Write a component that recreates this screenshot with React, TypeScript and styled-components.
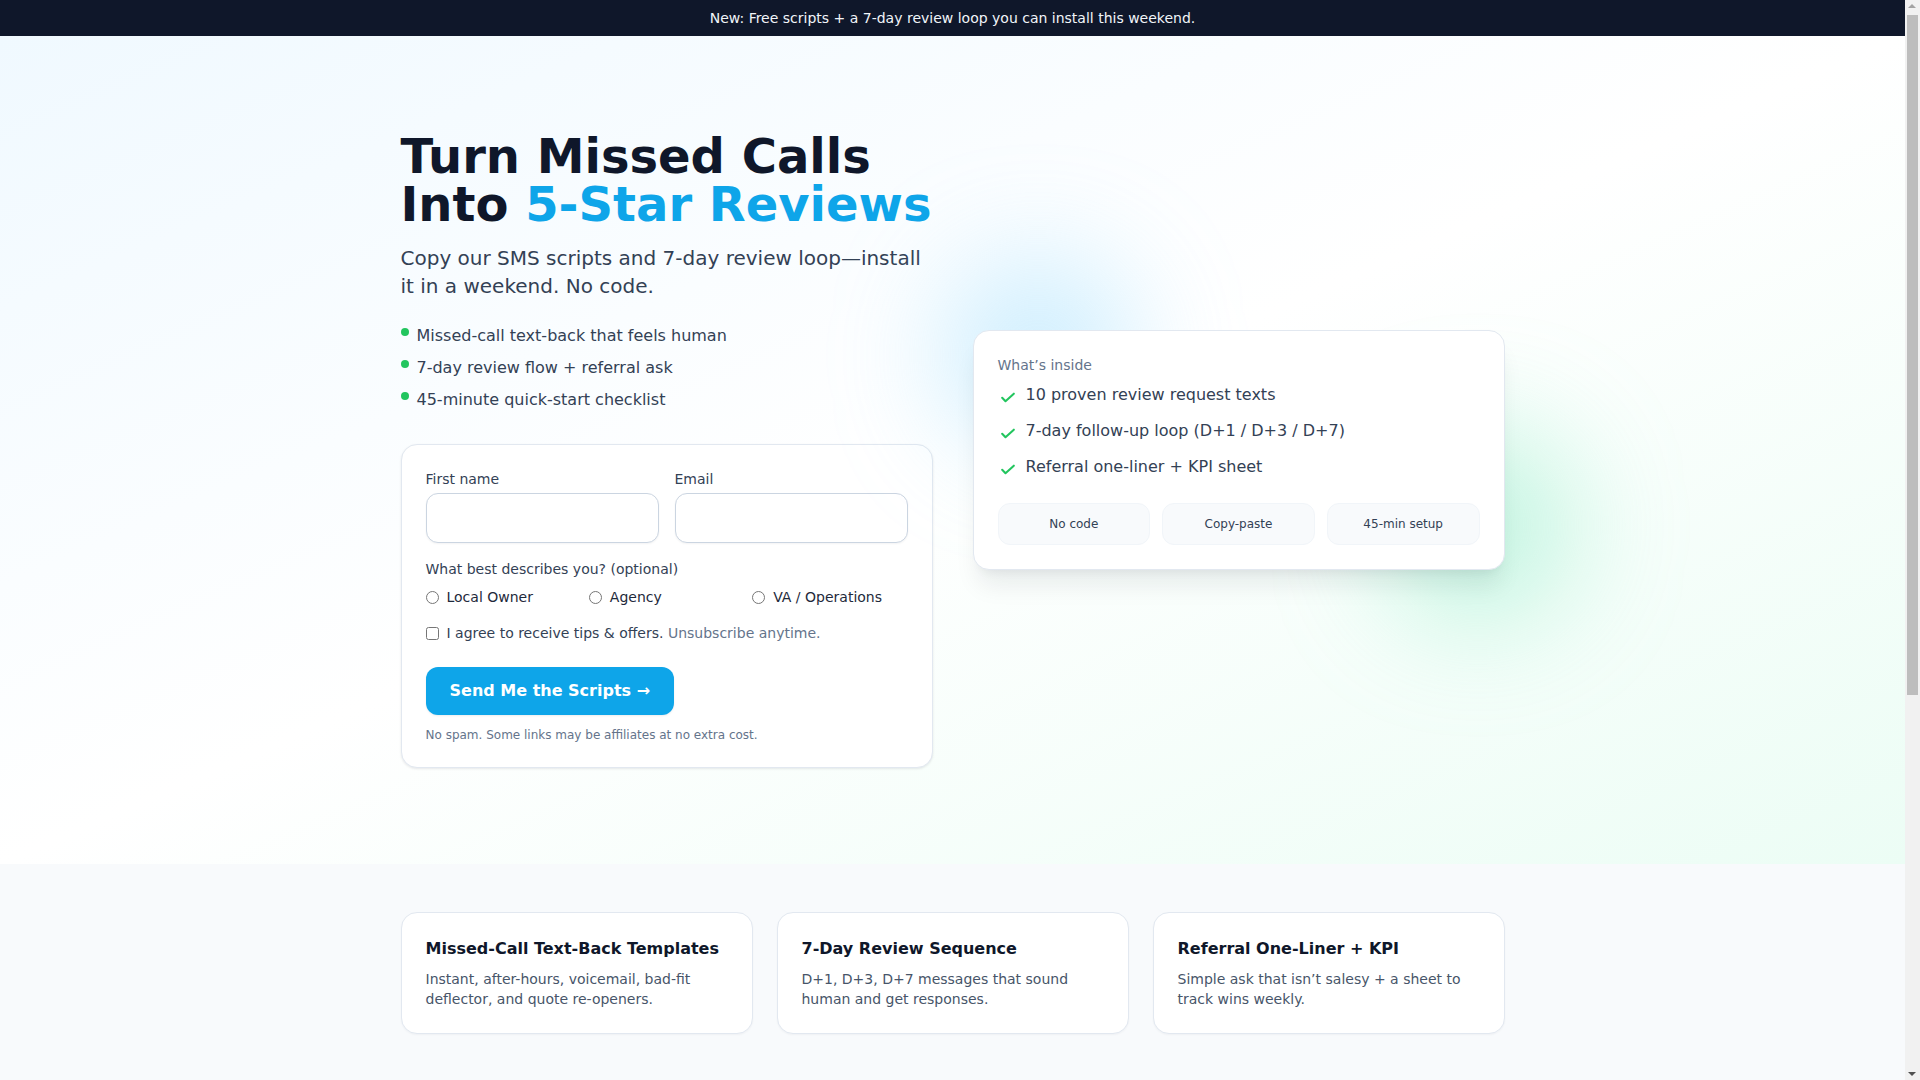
import React from "react";
import styled, { createGlobalStyle } from "styled-components";

const GlobalStyle = createGlobalStyle`
  *, *::before, *::after { box-sizing: border-box; }
  html, body { margin: 0; padding: 0; }
  body {
    font-family: "DejaVu Sans", "Noto Sans", sans-serif;
    color: #0f172a;
    background: #ffffff;
    margin-right: 15px;
    -webkit-font-smoothing: antialiased;
  }
  input, button { font-family: inherit; margin: 0; }
`;

const ScrollTrack = styled.div`
  position: fixed;
  top: 0;
  right: 0;
  width: 15px;
  height: 100vh;
  background: #f1f1f1;
  z-index: 50;
`;

const ScrollThumb = styled.div`
  position: absolute;
  top: 15px;
  left: 2px;
  width: 11px;
  height: 680px;
  background: #bdbdbd;
`;

const ScrollArrow = styled.div<{ $down?: boolean }>`
  position: absolute;
  left: 3px;
  ${(p) => (p.$down ? "bottom: 4px;" : "top: 4px;")}
  width: 0;
  height: 0;
  border-left: 4.5px solid transparent;
  border-right: 4.5px solid transparent;
  ${(p) => (p.$down ? "border-top: 4px solid #505050;" : "border-bottom: 4px solid #a3a3a3;")}
`;

const Banner = styled.div`
  background: #0f172a;
  color: #f1f5f9;
  font-size: 14px;
  line-height: 20px;
  text-align: center;
  padding: 8px 16px;
`;

const Hero = styled.section`
  position: relative;
  overflow: hidden;
  background: linear-gradient(to bottom right, #f0f9ff, #ffffff 50%, #ecfdf5);
  padding: 96px 0;
`;

const Container = styled.div`
  max-width: 1152px;
  margin: 0 auto;
  padding: 0 24px;
`;

const HeroGrid = styled.div`
  display: grid;
  grid-template-columns: 1fr 1fr;
  gap: 40px;
  align-items: center;
`;

const LeftCol = styled.div`
  display: flex;
  flex-direction: column;
`;

const Title = styled.h1`
  margin: 0;
  font-size: 48px;
  line-height: 48px;
  font-weight: 700;
  color: #0f172a;
`;

const TitleLine = styled.span`
  display: block;
`;

const Accent = styled.span`
  color: #0ea5e9;
`;

const Lead = styled.p`
  margin: 16px 0 0;
  font-size: 20px;
  line-height: 28px;
  color: #334155;
`;

const BulletList = styled.ul`
  list-style: none;
  margin: 24px 0 0;
  padding: 0;
  display: flex;
  flex-direction: column;
  gap: 8px;
`;

const Bullet = styled.li`
  display: flex;
  align-items: flex-start;
  gap: 8px;
  font-size: 16px;
  line-height: 24px;
  color: #334155;
`;

const Dot = styled.span`
  flex: none;
  width: 8px;
  height: 8px;
  margin-top: 4px;
  border-radius: 50%;
  background: #22c55e;
`;

const FormCard = styled.form`
  margin-top: 32px;
  background: #ffffff;
  border: 1px solid #e2e8f0;
  border-radius: 16px;
  padding: 24px;
  box-shadow: 0 1px 3px rgba(15, 23, 42, 0.06), 0 1px 2px rgba(15, 23, 42, 0.04);
`;

const FieldRow = styled.div`
  display: grid;
  grid-template-columns: 1fr 1fr;
  gap: 16px;
`;

const Field = styled.label`
  display: flex;
  flex-direction: column;
  gap: 4px;
`;

const LabelText = styled.span`
  font-size: 14px;
  line-height: 20px;
  color: #334155;
`;

const TextInput = styled.input`
  width: 100%;
  height: 50px;
  border: 1px solid #cbd5e1;
  border-radius: 12px;
  padding: 12px 16px;
  font-size: 16px;
  background: #ffffff;
  box-shadow: 0 1px 2px rgba(15, 23, 42, 0.05);
  outline: none;
`;

const Group = styled.fieldset`
  border: 0;
  margin: 16px 0 0;
  padding: 0;
`;

const Legend = styled.legend`
  padding: 0;
  font-size: 14px;
  line-height: 20px;
  color: #334155;
`;

const RadioGrid = styled.div`
  margin-top: 8px;
  display: grid;
  grid-template-columns: repeat(3, 1fr);
  gap: 8px;
`;

const Choice = styled.label`
  display: flex;
  align-items: center;
  gap: 8px;
  font-size: 14px;
  line-height: 20px;
  color: #1e293b;
`;

const Control = styled.input`
  margin: 0;
  width: 13px;
  height: 13px;
`;

const Consent = styled.label`
  margin-top: 16px;
  display: flex;
  align-items: center;
  gap: 8px;
  font-size: 14px;
  line-height: 20px;
  color: #334155;
`;

const Muted = styled.span`
  color: #64748b;
`;

const ButtonRow = styled.div`
  margin-top: 24px;
  display: flex;
`;

const SubmitButton = styled.button`
  border: 0;
  border-radius: 12px;
  background: #0ea5e9;
  color: #ffffff;
  font-size: 16px;
  line-height: 24px;
  font-weight: 700;
  padding: 12px 24px;
  cursor: pointer;
  box-shadow: 0 1px 2px rgba(15, 23, 42, 0.08);
`;

const FinePrint = styled.p`
  margin: 12px 0 0;
  font-size: 12px;
  line-height: 16px;
  color: #64748b;
`;

const RightCol = styled.div`
  position: relative;
`;

const Glow = styled.div<{ $color: string; $top: number; $left: number; $size: number }>`
  position: absolute;
  top: ${(p) => p.$top}px;
  left: ${(p) => p.$left}px;
  width: ${(p) => p.$size}px;
  height: ${(p) => p.$size}px;
  border-radius: 50%;
  background: ${(p) => p.$color};
  filter: blur(56px);
  pointer-events: none;
`;

const InsideCard = styled.div`
  position: relative;
  background: #ffffff;
  border: 1px solid #e2e8f0;
  border-radius: 16px;
  padding: 24px;
  box-shadow: 0 20px 25px -5px rgba(15, 23, 42, 0.08), 0 8px 10px -6px rgba(15, 23, 42, 0.06);
`;

const Eyebrow = styled.div`
  font-size: 14px;
  line-height: 20px;
  color: #64748b;
`;

const CheckList = styled.ul`
  list-style: none;
  margin: 8px 0 0;
  padding: 0;
  display: flex;
  flex-direction: column;
  gap: 12px;
`;

const CheckItem = styled.li`
  display: flex;
  align-items: flex-start;
  gap: 8px;
  font-size: 16px;
  line-height: 24px;
  color: #334155;
`;

const CheckIcon = styled.svg`
  flex: none;
  margin-top: 4px;
`;

const BadgeRow = styled.div`
  margin-top: 24px;
  display: grid;
  grid-template-columns: repeat(3, 1fr);
  gap: 12px;
`;

const Badge = styled.div`
  background: #f8fafc;
  border: 1px solid #f1f5f9;
  border-radius: 12px;
  padding: 12px 8px;
  text-align: center;
  font-size: 12px;
  line-height: 16px;
  color: #334155;
`;

const Features = styled.section`
  background: #f8fafc;
  padding: 48px 0;
`;

const FeatureGrid = styled.div`
  display: grid;
  grid-template-columns: repeat(3, 1fr);
  gap: 24px;
`;

const FeatureCard = styled.div`
  background: #ffffff;
  border: 1px solid #e2e8f0;
  border-radius: 16px;
  padding: 24px;
  box-shadow: 0 1px 2px rgba(15, 23, 42, 0.04);
`;

const FeatureTitle = styled.h3`
  margin: 0;
  font-size: 16px;
  line-height: 24px;
  font-weight: 700;
  color: #0f172a;
`;

const FeatureText = styled.p`
  margin: 8px 0 0;
  font-size: 14px;
  line-height: 20px;
  color: #475569;
`;

const Steps = styled.section`
  background: #ffffff;
  padding: 64px 0;
`;

const SectionTitle = styled.h2`
  margin: 0;
  font-size: 30px;
  line-height: 36px;
  font-weight: 700;
  color: #0f172a;
`;

const StepList = styled.ol`
  margin: 24px 0 0;
  padding: 0 0 0 20px;
  display: flex;
  flex-direction: column;
  gap: 12px;
  font-size: 16px;
  line-height: 24px;
  color: #334155;
`;

const Footer = styled.footer`
  border-top: 1px solid #e2e8f0;
  padding: 32px 0;
  font-size: 14px;
  line-height: 20px;
  color: #64748b;
`;

const bullets = [
  "Missed-call text-back that feels human",
  "7-day review flow + referral ask",
  "45-minute quick-start checklist",
];

const inside = [
  "10 proven review request texts",
  "7-day follow-up loop (D+1 / D+3 / D+7)",
  "Referral one-liner + KPI sheet",
];

const badges = ["No code", "Copy-paste", "45-min setup"];

const roles = ["Local Owner", "Agency", "VA / Operations"];

const features = [
  {
    title: "Missed-Call Text-Back Templates",
    text: "Instant, after-hours, voicemail, bad-fit deflector, and quote re-openers.",
  },
  {
    title: "7-Day Review Sequence",
    text: "D+1, D+3, D+7 messages that sound human and get responses.",
  },
  {
    title: "Referral One-Liner + KPI",
    text: "Simple ask that isn’t salesy + a sheet to track wins weekly.",
  },
];

const Check = () => (
  <CheckIcon width="20" height="20" viewBox="0 0 24 24" fill="none" stroke="#22c55e" strokeWidth="2.5" strokeLinecap="round" strokeLinejoin="round">
    <path d="M5 13l4 4L19 8" />
  </CheckIcon>
);

export default function App() {
  return (
    <>
      <GlobalStyle />
      <ScrollTrack aria-hidden="true">
        <ScrollArrow />
        <ScrollThumb />
        <ScrollArrow $down />
      </ScrollTrack>
      <Banner>New: Free scripts + a 7-day review loop you can install this weekend.</Banner>
      <Hero>
        <Container>
          <HeroGrid>
            <LeftCol>
              <Title>
                <TitleLine>Turn Missed Calls</TitleLine>
                <TitleLine>
                  Into <Accent>5-Star Reviews</Accent>
                </TitleLine>
              </Title>
              <Lead>Copy our SMS scripts and 7-day review loop—install it in a weekend. No code.</Lead>
              <BulletList>
                {bullets.map((b) => (
                  <Bullet key={b}>
                    <Dot />
                    {b}
                  </Bullet>
                ))}
              </BulletList>
              <FormCard onSubmit={(e) => e.preventDefault()}>
                <FieldRow>
                  <Field>
                    <LabelText>First name</LabelText>
                    <TextInput type="text" />
                  </Field>
                  <Field>
                    <LabelText>Email</LabelText>
                    <TextInput type="email" />
                  </Field>
                </FieldRow>
                <Group>
                  <Legend>What best describes you? (optional)</Legend>
                  <RadioGrid>
                    {roles.map((r) => (
                      <Choice key={r}>
                        <Control type="radio" name="role" />
                        {r}
                      </Choice>
                    ))}
                  </RadioGrid>
                </Group>
                <Consent>
                  <Control type="checkbox" />
                  <span>
                    I agree to receive tips &amp; offers. <Muted>Unsubscribe anytime.</Muted>
                  </span>
                </Consent>
                <ButtonRow>
                  <SubmitButton type="submit">Send Me the Scripts →</SubmitButton>
                </ButtonRow>
                <FinePrint>No spam. Some links may be affiliates at no extra cost.</FinePrint>
              </FormCard>
            </LeftCol>
            <RightCol>
              <Glow $color="rgba(125, 211, 252, 0.38)" $top={-70} $left={-30} $size={190} />
              <Glow $color="rgba(110, 231, 183, 0.4)" $top={100} $left={410} $size={190} />
              <InsideCard>
                <Eyebrow>What’s inside</Eyebrow>
                <CheckList>
                  {inside.map((i) => (
                    <CheckItem key={i}>
                      <Check />
                      {i}
                    </CheckItem>
                  ))}
                </CheckList>
                <BadgeRow>
                  {badges.map((b) => (
                    <Badge key={b}>{b}</Badge>
                  ))}
                </BadgeRow>
              </InsideCard>
            </RightCol>
          </HeroGrid>
        </Container>
      </Hero>
      <Features>
        <Container>
          <FeatureGrid>
            {features.map((f) => (
              <FeatureCard key={f.title}>
                <FeatureTitle>{f.title}</FeatureTitle>
                <FeatureText>{f.text}</FeatureText>
              </FeatureCard>
            ))}
          </FeatureGrid>
        </Container>
      </Features>
      <Steps>
        <Container>
          <SectionTitle>Install it this weekend</SectionTitle>
          <StepList>
            <li>Turn on missed-call text-back with the instant template.</li>
            <li>Schedule the D+1, D+3 and D+7 review messages.</li>
            <li>Add the referral one-liner to your thank-you text.</li>
            <li>Track replies, reviews and referrals in the KPI sheet.</li>
          </StepList>
        </Container>
      </Steps>
      <Footer>
        <Container>© 2025 Missed Calls to Reviews. All rights reserved.</Container>
      </Footer>
    </>
  );
}
